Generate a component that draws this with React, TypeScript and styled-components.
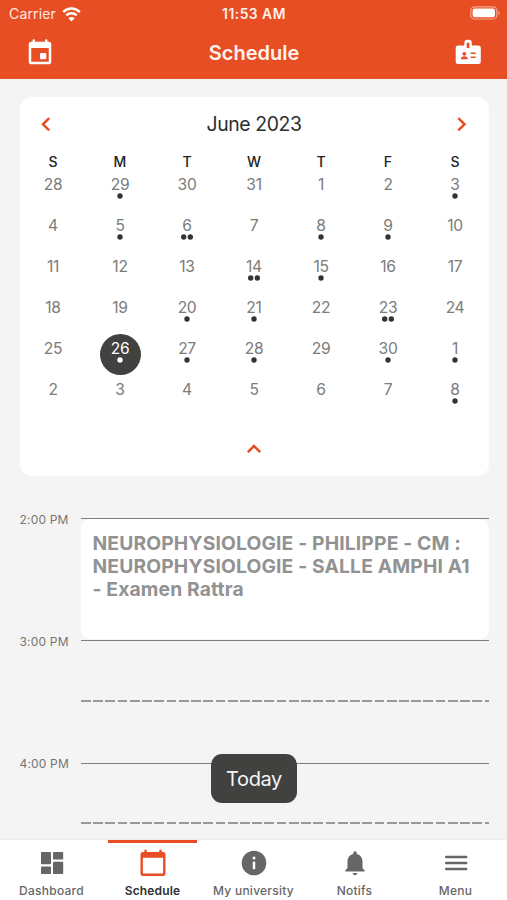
import React from 'react';
import styled, { createGlobalStyle } from 'styled-components';

const ORANGE = '#e84e23';
const DARK = '#41413f';
const GREY = '#666666';

const GlobalStyle = createGlobalStyle`
  * { box-sizing: border-box; }
  body { margin: 0; background: #f4f4f4; font-family: Inter, "Liberation Sans", sans-serif; }
  button { border: 0; padding: 0; margin: 0; background: none; font: inherit; color: inherit; }
  svg { display: block; flex: none; }
`;

const Screen = styled.div`
  position: relative;
  width: 507px;
  height: 900px;
  overflow: hidden;
  display: flex;
  flex-direction: column;
  background: #f4f4f4;
`;

const Header = styled.header`
  height: 79.3px;
  flex: none;
  background: ${ORANGE};
  color: #fff;
`;

const StatusBar = styled.div`
  height: 28px;
  padding: 0 6px 0 9px;
  display: grid;
  grid-template-columns: 1fr auto 1fr;
  align-items: center;
  line-height: 16px;
`;

const Carrier = styled.div`
  display: flex;
  align-items: center;
  gap: 6px;
  font-size: 14px;
  letter-spacing: 0.15px;
  color: #ffe9e2;
`;

const Clock = styled.div`
  margin-right: 2px;
  font-size: 13.8px;
  font-weight: 600;
  letter-spacing: 0.5px;
  color: #fff0eb;
`;

const Battery = styled.div`
  justify-self: end;
  margin-top: -2px;
`;

const TitleBar = styled.div`
  height: 49px;
  padding: 0 24px 0 25px;
  display: flex;
  align-items: center;
  justify-content: space-between;
`;

const Title = styled.h1`
  margin: 0;
  font-size: 20px;
  font-weight: 600;
  line-height: 24px;
  letter-spacing: 0;
  color: #fff3ef;
`;

const CalendarCard = styled.section`
  height: 378.4px;
  flex: none;
  margin: 18px 18.5px 0 19.5px;
  border-radius: 12px;
  background: #fff;
  display: flex;
  flex-direction: column;
`;

const MonthBar = styled.div`
  height: 54px;
  padding: 0 16px 0 16px;
  display: flex;
  align-items: center;
  justify-content: space-between;
`;

const Month = styled.div`
  font-size: 19.4px;
  letter-spacing: -0.4px;
  color: #2d2d2d;
`;

const Grid = styled.div`
  display: grid;
  grid-template-columns: repeat(7, 1fr);
`;

const Weekday = styled.div`
  height: 19px;
  line-height: 21px;
  text-align: center;
  font-size: 14px;
  font-weight: 500;
  color: #222;
`;

const Day = styled.div<{ $active: boolean }>`
  justify-self: center;
  width: 41px;
  height: 41px;
  border-radius: 50%;
  padding-top: 4.6px;
  display: flex;
  flex-direction: column;
  align-items: center;
  font-size: 15.6px;
  letter-spacing: -0.3px;
  line-height: 19px;
  color: ${p => (p.$active ? '#fff' : '#7b7b7b')};
  background: ${p => (p.$active ? DARK : 'transparent')};
`;

const DotRow = styled.svg`
  margin-top: -0.6px;
`;

const Collapse = styled.button`
  flex: 1;
  padding-top: 7px;
  display: flex;
  align-items: center;
  justify-content: center;
`;

const Agenda = styled.main`
  flex: 1;
  min-height: 0;
  overflow: hidden;
  padding: 34px 18.5px 0 19.5px;
`;

const Hour = styled.div`
  height: 122.3px;
  display: grid;
  grid-template-columns: 61px 1fr;
`;

const HourLabel = styled.div`
  height: 18px;
  line-height: 19px;
  font-size: 12px;
  letter-spacing: 0.18px;
  color: #747474;
  white-space: nowrap;
`;

const Slot = styled.div`
  margin-top: 8.3px;
  height: 122.3px;
  border-top: 1.4px solid #7d7d7d;
`;

const HalfLine = styled.div`
  margin-top: 58.6px;
  height: 2px;
  background: repeating-linear-gradient(90deg, #989898 0 9.8px, transparent 9.8px 12.23px);
`;

const Event = styled.article`
  height: 120px;
  padding: 13px 12px;
  border-radius: 9px;
  background: #fff;
  color: #929292;
  font-size: 19.3px;
  font-weight: 700;
  line-height: 23.2px;
  letter-spacing: 0.14px;
  white-space: nowrap;
`;

const Today = styled.button`
  position: absolute;
  left: 211px;
  top: 754px;
  width: 86px;
  height: 49px;
  border-radius: 11px;
  background: ${DARK};
  color: #f5f5f5;
  font-size: 20px;
  letter-spacing: -0.4px;
`;

const TabBar = styled.nav`
  position: relative;
  height: 60px;
  flex: none;
  display: grid;
  grid-template-columns: repeat(5, 1fr);
  padding: 0 1px 0 1px;
  background: #fff;
  box-shadow: 0 -1px 1px #ebebeb;
`;

const Tab = styled.button<{ $active?: boolean }>`
  justify-self: center;
  width: 89px;
  border-top: 3px solid ${p => (p.$active ? ORANGE : 'transparent')};
  display: flex;
  flex-direction: column;
  align-items: center;
  justify-content: flex-start;
  color: ${p => (p.$active ? '#2d2d2d' : GREY)};
  font-size: 12px;
  font-weight: ${p => (p.$active ? 600 : 500)};
  letter-spacing: ${p => (p.$active ? '0.15px' : '0.25px')};
  line-height: 16px;
  white-space: nowrap;
`;

const TabIcon = styled.span<{ $active?: boolean }>`
  height: 40px;
  display: flex;
  align-items: center;
  color: ${p => (p.$active ? ORANGE : GREY)};
`;

const WifiIcon = () => (
  <svg width="19" height="15" viewBox="0 0 19 15" fill="none" stroke="#fff" strokeWidth="2.5">
    <path d="M1.200 5C6 .4 13 .4 17.800 5" />
    <path d="M4.300 8.400c3-2.800 7.400-2.800 10.400 0" />
    <path d="M9.500 14.400 6.400 11.300c1.800-1.700 4.400-1.700 6.200 0z" fill="#fff" stroke="none" />
  </svg>
);

const BatteryIcon = () => (
  <svg width="31" height="14" viewBox="0 0 31 14">
    <rect x=".8" y=".8" width="26" height="12.2" rx="3.8" fill="none" stroke="#f4a58f" strokeWidth="1.2" />
    <rect x="2.6" y="2.6" width="22.4" height="8.6" rx="2.2" fill="#fff" />
    <path d="M28.4 4.8c1.7.6 1.7 3.6 0 4.2z" fill="#f4a58f" />
  </svg>
);

const EventIcon = () => (
  <svg width="30" height="30" viewBox="0 0 24 24" fill="#fff">
    <path fillRule="evenodd" d="M7 1a1 1 0 0 1 1 1v1h8V2a1 1 0 0 1 2 0v1h1a2 2 0 0 1 2 2v14a2 2 0 0 1-2 2H5a2 2 0 0 1-2-2V5a2 2 0 0 1 2-2h1V2a1 1 0 0 1 1-1zM5 8v10.300c0 .4.3.7.7.7h12.600c.4 0 .7-.3.7-.7V8z" />
    <rect x="12" y="12" width="5" height="5" rx=".8" />
  </svg>
);

const BadgeIcon = () => (
  <svg width="30" height="30" viewBox="0 1 30 30">
    <path fill="#fff" fillRule="evenodd" d="M11.300 8.400V5.800A3 3 0 0 1 14.300 2.800h1.500A3 3 0 0 1 18.800 5.800v2.600h6.500A2.500 2.500 0 0 1 27.800 10.900v13.700a2.500 2.500 0 0 1-2.500 2.500H5.200a2.500 2.500 0 0 1-2.500-2.500v-13.700A2.500 2.500 0 0 1 5.200 8.400zM13.700 5.700v5.400h2.700V5.700z" />
    <circle cx="11.300" cy="16.800" r="1.900" fill={ORANGE} />
    <path d="M7.800 22.200c0-2.100 1.500-2.900 3.500-2.900s3.500.8 3.500 2.900z" fill={ORANGE} />
    <path d="M17.700 16.300h5M17.700 20.200h5" stroke={ORANGE} strokeWidth="1.500" />
  </svg>
);

const Chevron = ({ d }: { d: string }) => (
  <svg width="20" height="20" viewBox="0 0 20 20" fill="none" stroke={ORANGE} strokeWidth="2.500">
    <path d={d} />
  </svg>
);

const Dots = ({ count, color }: { count: number; color: string }) => (
  <DotRow width="14" height="6" viewBox="0 0 14 6" fill={color}>
    {count === 1 && <circle cx="7" cy="3" r="2.700" />}
    {count === 2 && <><circle cx="3.700" cy="3" r="2.700" /><circle cx="10.300" cy="3" r="2.700" /></>}
  </DotRow>
);

const DashboardIcon = () => (
  <svg width="30" height="30" viewBox="0 0 30 30" fill="currentColor">
    <rect x="4" y="4" width="10" height="12.300" rx=".8" />
    <rect x="16" y="4" width="10.200" height="7.500" rx=".8" />
    <rect x="4" y="18.600" width="10" height="7.500" rx=".8" />
    <rect x="16" y="13.800" width="10.200" height="12.300" rx=".8" />
  </svg>
);

const CalendarIcon = () => (
  <svg width="30" height="30" viewBox="0 0 30 30" fill="currentColor">
    <path fillRule="evenodd" d="M7.500 1.500A1.200 1.200 0 0 1 8.700 2.700V4h12.600V2.700a1.200 1.200 0 0 1 2.400 0V4h1.300A2.500 2.500 0 0 1 27.500 6.500v19A2.500 2.500 0 0 1 25 28H5a2.500 2.500 0 0 1-2.500-2.500v-19A2.500 2.500 0 0 1 5 4h1.300V2.700A1.200 1.200 0 0 1 7.500 1.500zM4.900 9.800v15c0 .5.300.8.800.8h18.600c.5 0 .8-.3.800-.8v-15z" />
  </svg>
);

const InfoIcon = () => (
  <svg width="30" height="30" viewBox="0 0 30 30">
    <circle cx="15" cy="15" r="12.300" fill="currentColor" />
    <circle cx="15" cy="10" r="1.500" fill="#fff" />
    <path d="M15 13.700v7.500" stroke="#fff" strokeWidth="2.500" />
  </svg>
);

const BellIcon = () => (
  <svg width="30" height="30" viewBox="0 0 30 30" fill="currentColor">
    <path d="M15 3.300c1.100 0 1.800.8 1.800 2v.8c3.600.9 5.700 3.900 5.700 7.700v6.300l1.800 1.800c.8.800.5 1.700-.5 1.700H6.200c-1 0-1.300-.9-.5-1.700l1.800-1.800v-6.300c0-3.800 2.100-6.800 5.700-7.700v-.8c0-1.200.7-2 1.800-2z" />
    <path d="M12.700 25h4.600c0 1.300-1 2.200-2.300 2.200s-2.300-.9-2.300-2.200z" />
  </svg>
);

const MenuIcon = () => (
  <svg width="30" height="30" viewBox="0 0 30 30" stroke="currentColor" strokeWidth="2.400" strokeLinecap="round">
    <path d="M5.200 9h20M5.200 15h20M5.200 21h20" />
  </svg>
);

const days: [number, number][] = [
  [28, 0], [29, 1], [30, 0], [31, 0], [1, 0], [2, 0], [3, 1],
  [4, 0], [5, 1], [6, 2], [7, 0], [8, 1], [9, 1], [10, 0],
  [11, 0], [12, 0], [13, 0], [14, 2], [15, 1], [16, 0], [17, 0],
  [18, 0], [19, 0], [20, 1], [21, 1], [22, 0], [23, 2], [24, 0],
  [25, 0], [26, 1], [27, 1], [28, 1], [29, 0], [30, 1], [1, 1],
  [2, 0], [3, 0], [4, 0], [5, 0], [6, 0], [7, 0], [8, 1],
];

const tabs = [
  { label: 'Dashboard', Icon: DashboardIcon },
  { label: 'Schedule', Icon: CalendarIcon, active: true },
  { label: 'My university', Icon: InfoIcon },
  { label: 'Notifs', Icon: BellIcon },
  { label: 'Menu', Icon: MenuIcon },
];

export default function App() {
  return (
    <>
      <GlobalStyle />
      <Screen>
        <Header>
          <StatusBar>
            <Carrier>Carrier <WifiIcon /></Carrier>
            <Clock>11:53 AM</Clock>
            <Battery><BatteryIcon /></Battery>
          </StatusBar>
          <TitleBar>
            <EventIcon />
            <Title>Schedule</Title>
            <BadgeIcon />
          </TitleBar>
        </Header>
        <CalendarCard>
          <MonthBar>
            <Chevron d="M13.200 4.200 7 10.300l6.200 6.100" />
            <Month>June 2023</Month>
            <Chevron d="M6.300 4.200 12.500 10.300l-6.200 6.100" />
          </MonthBar>
          <Grid>
            {['S', 'M', 'T', 'W', 'T', 'F', 'S'].map((d, i) => <Weekday key={i}>{d}</Weekday>)}
            {days.map(([day, count], i) => (
              <Day key={i} $active={i === 29}>
                {day}
                <Dots count={count} color={i === 29 ? '#fff' : '#333'} />
              </Day>
            ))}
          </Grid>
          <Collapse aria-label="Collapse calendar">
            <Chevron d="M3.800 13.200 10 7l6.200 6.200" />
          </Collapse>
        </CalendarCard>
        <Agenda>
          <Hour>
            <HourLabel>2:00 PM</HourLabel>
            <Slot>
              <Event>
                NEUROPHYSIOLOGIE - PHILIPPE - CM :<br />
                NEUROPHYSIOLOGIE - SALLE AMPHI A1<br />
                - Examen Rattra
              </Event>
            </Slot>
          </Hour>
          <Hour>
            <HourLabel>3:00 PM</HourLabel>
            <Slot><HalfLine /></Slot>
          </Hour>
          <Hour>
            <HourLabel>4:00 PM</HourLabel>
            <Slot><HalfLine /></Slot>
          </Hour>
        </Agenda>
        <TabBar>
          {tabs.map(({ label, Icon, active }) => (
            <Tab key={label} $active={active}>
              <TabIcon $active={active}><Icon /></TabIcon>
              {label}
            </Tab>
          ))}
        </TabBar>
        <Today>Today</Today>
      </Screen>
    </>
  );
}
